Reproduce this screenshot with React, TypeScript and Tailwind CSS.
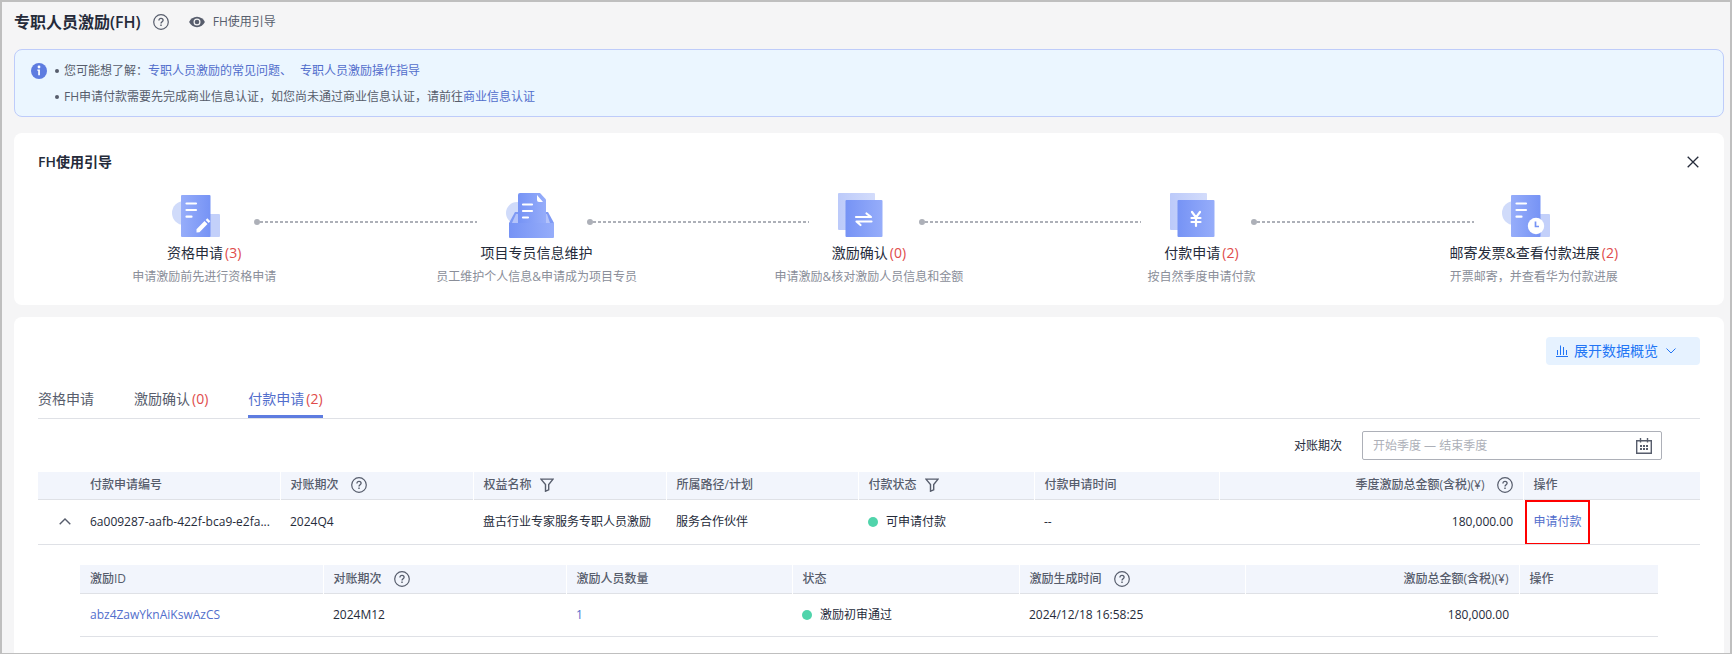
import React, { useState } from 'react';

const Help = ({ className = '' }) => (
  <svg viewBox="0 0 16 16" className={`shrink-0 ${className}`} fill="none" stroke="#575d6c" strokeWidth="1.2">
    <circle cx="8" cy="8" r="7.3" />
    <path d="M5.9 6.4c0-1.3.9-2.1 2.1-2.1s2.1.8 2.1 1.9c0 1.4-2.1 1.6-2.1 3.2" strokeWidth="1.3" />
    <path d="M8 10.6v1.3" strokeWidth="1.4" />
  </svg>
);

const Filter = () => (
  <svg viewBox="0 0 14 14" className="h-3.5 w-3.5 shrink-0" fill="none" stroke="#575d6c" strokeWidth="1.4">
    <path d="M.9 1.1h12.2L8.7 6.6v5.2l-3.2 1.4V6.6z" />
  </svg>
);

const Eye = () => (
  <svg viewBox="0 0 16 12" className="h-3 w-4 shrink-0">
    <path fill="#575d6c" d="M8 .8C4.500.8 1.500 2.900.1 6c1.400 3.100 4.400 5.200 7.900 5.200s6.500-2.100 7.900-5.200C14.500 2.900 11.500.8 8 .8z" />
    <circle cx="8" cy="6" r="3.500" fill="#f5f5f6" />
    <circle cx="8" cy="6" r="2.300" fill="#575d6c" />
  </svg>
);

const Info = () => (
  <svg viewBox="0 0 16 16" className="h-4 w-4 shrink-0">
    <circle cx="8" cy="8" r="8" fill="#5e7ce0" />
    <circle cx="8" cy="4" r="1.400" fill="#fff" />
    <path d="M6.300 6.500h2.600v5.700H7.200V7.800h-.9z" fill="#fff" />
  </svg>
);

const Gradients = () => (
  <svg className="absolute h-0 w-0" aria-hidden="true">
    <defs>
      <linearGradient id="fwd">
        <stop offset="0" stopColor="#96adfa" />
        <stop offset="1" stopColor="#7693f5" />
      </linearGradient>
      <linearGradient id="back">
        <stop offset="0" stopColor="#7693f5" />
        <stop offset="1" stopColor="#96adfa" />
      </linearGradient>
      <linearGradient id="pale">
        <stop offset="0" stopColor="#bccafa" />
        <stop offset="1" stopColor="#d3dcfb" />
      </linearGradient>
    </defs>
  </svg>
);

const PaperBase = () => (
  <>
    <circle cx="12" cy="20" r="12" fill="#d0dbfa" />
    <rect x="36" y="21" width="12" height="23" rx="1" fill="#c3d0fa" />
    <rect x="9" y="2" width="29.500" height="42" rx="1" fill="url(#fwd)" />
    <path d="M14.500 10.500h9.500M14.500 17h9.500M14.500 23.700h5" stroke="#fff" strokeWidth="2.200" strokeLinecap="round" />
  </>
);

const SheetBase = () => (
  <>
    <rect x="1" width="37" height="37" rx="1" fill="url(#pale)" />
    <rect x="8.500" y="7" width="37" height="37" rx="1" fill="url(#back)" />
  </>
);

const icons = {
  apply: (
    <>
      <PaperBase />
      <path d="M24.500 39.500v-3.300l8-8.300 3 3-8 8.300zM33.700 26.900l1.600-1.600 3 3-1.600 1.600z" fill="#fff" />
    </>
  ),
  profile: (
    <>
      <circle cx="12" cy="20" r="11" fill="#d0dbfa" />
      <path d="M10 19h33l6 11H4z" fill="#7f9af4" />
      <path d="M11 21h31l3 9H7z" fill="#b4c3fa" />
      <path d="M13 2a2 2 0 0 1 2-2h20l6 6.500V30H13z" fill="url(#back)" />
      <path d="M32 2l6 7h-4a2 2 0 0 1-2-2z" fill="#fff" />
      <path d="M18 11.500h9M18 18h9M18 24.500h5" stroke="#fff" strokeWidth="2.200" strokeLinecap="round" />
      <path d="M4 30h45v14a1 1 0 0 1-1 1H5a1 1 0 0 1-1-1z" fill="url(#back)" />
    </>
  ),
  confirm: (
    <>
      <SheetBase />
      <path d="M19 24h15l-4.500-3.500M34.500 28.500h-15l4 3.500" fill="none" stroke="#fff" strokeWidth="2.200" strokeLinecap="round" strokeLinejoin="round" />
    </>
  ),
  pay: (
    <>
      <SheetBase />
      <path d="M23 19l4 5.500 4-5.500M27 24.500V33M22.500 25h9M22.500 29h9" fill="none" stroke="#fff" strokeWidth="2.200" strokeLinecap="round" />
    </>
  ),
  mail: (
    <>
      <PaperBase />
      <circle cx="34" cy="33" r="8.200" fill="#fff" />
      <path d="M33.500 28.500v5h3.500" fill="none" stroke="#7693f5" strokeWidth="1.700" />
    </>
  ),
};

const steps = [
  { icon: 'apply', title: '资格申请', count: '(3)', desc: '申请激励前先进行资格申请' },
  { icon: 'profile', title: '项目专员信息维护', count: '', desc: '员工维护个人信息&申请成为项目专员' },
  { icon: 'confirm', title: '激励确认', count: '(0)', desc: '申请激励&核对激励人员信息和金额' },
  { icon: 'pay', title: '付款申请', count: '(2)', desc: '按自然季度申请付款' },
  { icon: 'mail', title: '邮寄发票&查看付款进展', count: '(2)', desc: '开票邮寄，并查看华为付款进展' },
];

const tabs = [
  { name: '资格申请', count: '' },
  { name: '激励确认', count: '(0)' },
  { name: '付款申请', count: '(2)' },
];

const Count = ({ children }) => (children ? <span className="ml-0.5 text-[#e04b4b]">{children}</span> : null);

const Th = ({ children = null, right = false, last = false }) => (
  <th className={`px-2.5 py-0 font-medium ${last ? '' : 'border-r border-r-white'}`}>
    <div className={`flex items-center whitespace-nowrap ${right ? 'justify-end' : ''}`}>{children}</div>
  </th>
);

const Status = ({ children }) => (
  <span className="flex items-center gap-2">
    <span className="h-2.5 w-2.5 shrink-0 rounded-full bg-[#50d4ab]" />
    {children}
  </span>
);

const App = () => {
  const [active, setActive] = useState(2);
  const [guideOpen, setGuideOpen] = useState(true);

  return (
    <div className="flex min-h-screen flex-col border-2 border-[#bfbfbf] bg-[#f5f5f6] pl-3 pr-1.5 font-['Open_Sans','Noto_Sans_CJK_SC',sans-serif] text-xs text-[#252b3a]">
      <Gradients />

      <header className="flex h-[47px] items-center pb-2">
        <h1 className="text-base font-semibold">专职人员激励(FH)</h1>
        <Help className="ml-3 h-4 w-4" />
        <button className="ml-5 flex items-center gap-2 text-[#575d6c]" onClick={() => setGuideOpen(true)}>
          <Eye />
          FH使用引导
        </button>
      </header>

      <section className="flex rounded-lg border border-[#beccfa] bg-[#ebf6ff] pb-1.5 pl-4 pt-2 text-[#575d6c]">
        <span className="flex h-[26px] items-center">
          <Info />
        </span>
        <ul className="ml-2 leading-[26px]">
          <li className="flex items-center gap-[5px]">
            <span className="h-1 w-1 rounded-full bg-[#575d6c]" />
            <span>
              您可能想了解：
              <a href="#faq" className="text-[#526ecc]">专职人员激励的常见问题、</a>
              <a href="#manual" className="ml-2 text-[#526ecc]">专职人员激励操作指导</a>
            </span>
          </li>
          <li className="flex items-center gap-[5px]">
            <span className="h-1 w-1 rounded-full bg-[#575d6c]" />
            <span>
              FH申请付款需要先完成商业信息认证，如您尚未通过商业信息认证，请前往
              <a href="#verify" className="text-[#526ecc]">商业信息认证</a>
            </span>
          </li>
        </ul>
      </section>

      {guideOpen && (
        <section className="mt-4 rounded-lg bg-white px-6 pb-4 pt-4">
          <div className="flex h-[26px] items-center justify-between">
            <h2 className="text-sm font-semibold">FH使用引导</h2>
            <button aria-label="关闭" className="p-px" onClick={() => setGuideOpen(false)}>
              <svg viewBox="0 0 12 12" className="h-3 w-3" stroke="#252b3a" strokeWidth="1.3">
                <path d="M.7.7l10.600 10.600M11.300.7L.7 11.300" />
              </svg>
            </button>
          </div>

          <div className="mt-[18px] flex items-center pl-[calc(10%-32px)] pr-[calc(10%-18px)]">
            {steps.map((step, i) => (
              <React.Fragment key={step.icon}>
                {i > 0 && (
                  <div className="ml-8 mr-7 flex flex-1 items-center pt-3">
                    <span className="h-1.5 w-1.5 rounded-full bg-[#adb0b8]" />
                    <span className="h-0.5 flex-1 bg-[repeating-linear-gradient(90deg,#adb0b8_0_3px,transparent_3px_5px)]" />
                  </div>
                )}
                <svg viewBox="0 0 50 45" className="h-[45px] w-[50px] shrink-0">{icons[step.icon]}</svg>
              </React.Fragment>
            ))}
          </div>

          <div className="mt-[3px] grid grid-cols-5 text-center">
            {steps.map((step) => (
              <div key={step.title}>
                <h3 className="text-sm leading-6">
                  {step.title}
                  <Count>{step.count}</Count>
                </h3>
                <p className="leading-6 text-[#8a8e99]">{step.desc}</p>
              </div>
            ))}
          </div>
        </section>
      )}

      <main className="mt-3 flex-1 rounded-t-lg bg-white px-6 pt-5">
        <div className="flex justify-end">
          <button className="flex h-7 w-[154px] items-center rounded bg-[#e6f2ff] pl-2.5 text-sm text-[#2275f5]">
            <svg viewBox="0 0 12 12" className="mr-1.5 h-3 w-3" stroke="#2275f5">
              <path d="M0 11.500h12M1.500 5v5M4.500.5V10M7.500 2v8M10.500 5v5" />
            </svg>
            展开数据概览
            <svg viewBox="0 0 10 6" className="ml-2 h-1.5 w-2.5" fill="none" stroke="#2275f5">
              <path d="M.5.5L5 5 9.500.5" />
            </svg>
          </button>
        </div>

        <div role="tablist" className="mt-4 flex gap-10 border-b border-[#dfe1e6] text-sm text-[#575d6c]">
          {tabs.map((tab, i) => (
            <button
              key={tab.name}
              role="tab"
              aria-selected={active === i}
              onClick={() => setActive(i)}
              className={`h-[37px] border-b-[3px] pt-px ${active === i ? 'border-[#5e7ce0] text-[#526ecc]' : 'border-transparent'}`}
            >
              {tab.name}
              <Count>{tab.count}</Count>
            </button>
          ))}
        </div>

        <div className="mt-3 flex items-center justify-end pr-[38px]">
          <label htmlFor="period" className="mr-5">对账期次</label>
          <div className="flex h-[29px] w-[300px] items-center rounded-xs border border-[#adb0b8] pl-2.5 pr-[9px]">
            <input id="period" placeholder="开始季度 — 结束季度" className="min-w-0 flex-1 outline-none placeholder:text-[#adb0b8]" />
            <svg viewBox="0 0 16 16" className="h-4 w-4" fill="none" stroke="#575d6c" strokeWidth="1.400">
              <path d="M.7 2.700h14.600v12.600H.7zM4.500 0v4.500M11.500 0v4.500" />
              <path d="M4 8h8M4 11h8" strokeWidth="1.800" strokeDasharray="2 1" />
            </svg>
          </div>
        </div>

        <table className="mt-3 w-full table-fixed text-left">
          <colgroup>
            <col className="w-[42px]" />
            <col className="w-[200px]" />
            <col className="w-[193px]" />
            <col className="w-[193px]" />
            <col className="w-[192px]" />
            <col className="w-[176px]" />
            <col className="w-[185px]" />
            <col />
            <col className="w-[177px]" />
          </colgroup>
          <thead className="bg-[#f2f5fc] text-[#575d6c]">
            <tr className="h-[27px] border-b border-[#dfe1e6]">
              <th />
              <Th>付款申请编号</Th>
              <Th>对账期次<Help className="ml-3 h-4 w-4" /></Th>
              <Th><span className="mr-2">权益名称</span><Filter /></Th>
              <Th>所属路径/计划</Th>
              <Th><span className="mr-2">付款状态</span><Filter /></Th>
              <Th>付款申请时间</Th>
              <Th right>季度激励总金额(含税)(¥)<Help className="ml-3 h-4 w-4" /></Th>
              <Th last>操作</Th>
            </tr>
          </thead>
          <tbody>
            <tr className="h-11 border-b border-[#dfe1e6]">
              <td className="pl-[21px]">
                <button aria-label="收起" className="block">
                  <svg viewBox="0 0 12 7" className="h-[7px] w-3" fill="none" stroke="#575d6c" strokeWidth="1.400">
                    <path d="M.7 6.300L6 1l5.300 5.300" />
                  </svg>
                </button>
              </td>
              <td className="whitespace-nowrap pl-2.5">6a009287-aafb-422f-bca9-e2fa...</td>
              <td className="px-2.5">2024Q4</td>
              <td className="px-2.5">盘古行业专家服务专职人员激励</td>
              <td className="px-2.5">服务合作伙伴</td>
              <td className="px-2.5"><Status>可申请付款</Status></td>
              <td className="px-2.5">--</td>
              <td className="px-2.5 text-right">180,000.00</td>
              <td className="pl-0.5">
                <a href="#pay" className="-mb-px flex h-[45px] w-[65px] items-center justify-center border-2 border-[#ff0000] text-[#526ecc]">
                  申请付款
                </a>
              </td>
            </tr>
          </tbody>
        </table>

        <div className="pb-4 pl-[42px] pr-[42px] pt-5">
          <table className="w-full table-fixed text-left">
            <colgroup>
              <col className="w-[243px]" />
              <col className="w-[243px]" />
              <col className="w-[226px]" />
              <col className="w-[227px]" />
              <col className="w-[226px]" />
              <col />
              <col className="w-[139px]" />
            </colgroup>
            <thead className="bg-[#f2f5fc] text-[#575d6c]">
              <tr className="h-[29px] border-b border-[#dfe1e6]">
                <Th>激励ID</Th>
                <Th>对账期次<Help className="ml-3 h-4 w-4" /></Th>
                <Th>激励人员数量</Th>
                <Th>状态</Th>
                <Th>激励生成时间<Help className="ml-3 h-4 w-4" /></Th>
                <Th right>激励总金额(含税)(¥)</Th>
                <Th last>操作</Th>
              </tr>
            </thead>
            <tbody>
              <tr className="h-[43px] border-b border-[#dfe1e6]">
                <td className="px-2.5"><a href="#detail" className="text-[#526ecc]">abz4ZawYknAiKswAzCS</a></td>
                <td className="px-2.5">2024M12</td>
                <td className="px-2.5">
                  <a href="#people" className="text-[#526ecc]">1</a>
                </td>
                <td className="px-2.5"><Status>激励初审通过</Status></td>
                <td className="px-2.5">2024/12/18 16:58:25</td>
                <td className="px-2.5 text-right">180,000.00</td>
                <td />
              </tr>
            </tbody>
          </table>
        </div>
      </main>
    </div>
  );
};

export default App;
